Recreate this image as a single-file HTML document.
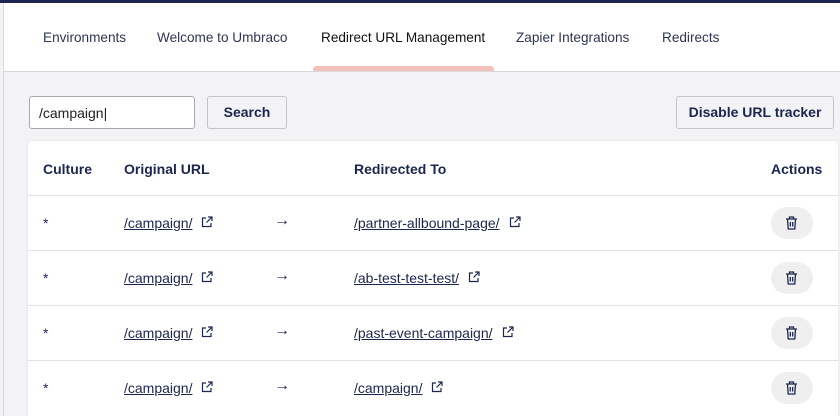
<!DOCTYPE html><html><head><style>
*{box-sizing:border-box;margin:0;padding:0}
html,body{width:840px;height:416px;overflow:hidden}
body{background:#f3f3f5;font-family:"Liberation Sans",sans-serif;color:#1b264f;position:relative}
.top{position:absolute;left:0;top:0;width:840px;height:3px;background:#1b264f}
.lb{position:absolute;left:3px;top:3px;width:1px;height:413px;background:#d8d7d9}
.hdr{position:absolute;left:4px;top:3px;right:0;height:69px;background:#fff;border-bottom:1px solid #d8d7d9}
.tab{position:absolute;top:27px;font-size:13.6px;color:#2d3653}
.act{position:absolute;left:309px;top:63px;width:181px;height:5px;background:#f5c1bc;border-radius:3px 3px 0 0}
.inp{position:absolute;left:29px;top:96px;width:166px;height:33px;background:#fff;border:1px solid #a9a9ad;border-radius:3px;font-size:14px;padding:8px 9px;color:#222}
.btn{position:absolute;top:96px;height:33px;background:#f3f3f5;border:1px solid #c5c5c8;border-radius:3px;font-size:14px;font-weight:bold;text-align:center;line-height:31px;color:#1b264f}
.card{position:absolute;left:28px;top:141px;width:810px;height:275px;background:#fff;border-radius:4px 4px 0 0;box-shadow:0 0 2px rgba(0,0,0,.1);overflow:hidden}
.row{position:absolute;left:0;width:810px;height:55px;border-top:1px solid #e2e2e4}
.c{position:absolute;top:19px;font-size:14px;color:#1b264f}
.h{font-weight:bold;font-size:14px;top:20px}
a{color:#1b264f;text-decoration:underline}
.ic{display:inline-block;margin-left:9px;vertical-align:0}
.ar{font-size:16px;top:16px}
.tr{position:absolute;left:743px;top:11px;width:42px;height:32px;border-radius:16px;background:#efefef}
.tr svg{position:absolute;left:14px;top:9px}
</style></head><body>
<div class="top"></div><div class="lb"></div>
<div class="hdr">
<span class="tab" style="left:39px">Environments</span>
<span class="tab" style="left:153px">Welcome to Umbraco</span>
<span class="tab" style="left:317px;color:#111">Redirect URL Management</span>
<span class="tab" style="left:512px">Zapier Integrations</span>
<span class="tab" style="left:658px">Redirects</span>
<div class="act"></div>
</div>
<div class="inp">/campaign|</div>
<div class="btn" style="left:207px;width:80px">Search</div>
<div class="btn" style="left:676px;width:158px">Disable URL tracker</div>
<div class="card">
<div class="c h" style="left:15px">Culture</div>
<div class="c h" style="left:96px">Original URL</div>
<div class="c h" style="left:326px">Redirected To</div>
<div class="c h" style="left:743px">Actions</div>
<div class="row" style="top:54px"><span class="c" style="left:15px">*</span><span class="c" style="left:96px"><a>/campaign/</a><svg class="ic" width="12" height="12" viewBox="0 0 12 12" fill="none" stroke="#1b264f" stroke-width="1.2"><path d="M5 2H1.5v8.5H10V7M7 1h4v4M11 1 5.5 6.5"/></svg></span><span class="c ar" style="left:246px">→</span><span class="c" style="left:326px"><a>/partner-allbound-page/</a><svg class="ic" width="12" height="12" viewBox="0 0 12 12" fill="none" stroke="#1b264f" stroke-width="1.2"><path d="M5 2H1.5v8.5H10V7M7 1h4v4M11 1 5.5 6.5"/></svg></span><div class="tr"><svg width="13" height="14" viewBox="0 0 13 14" fill="none" stroke="#1b264f" stroke-width="1.3"><path d="M1 3h11M4.5 3V1h4v2M2.5 3l.7 10h6.6l.7-10M5.3 6v4.5M7.7 6v4.5"/></svg></div></div>
<div class="row" style="top:109px"><span class="c" style="left:15px">*</span><span class="c" style="left:96px"><a>/campaign/</a><svg class="ic" width="12" height="12" viewBox="0 0 12 12" fill="none" stroke="#1b264f" stroke-width="1.2"><path d="M5 2H1.5v8.5H10V7M7 1h4v4M11 1 5.5 6.5"/></svg></span><span class="c ar" style="left:246px">→</span><span class="c" style="left:326px"><a>/ab-test-test-test/</a><svg class="ic" width="12" height="12" viewBox="0 0 12 12" fill="none" stroke="#1b264f" stroke-width="1.2"><path d="M5 2H1.5v8.5H10V7M7 1h4v4M11 1 5.5 6.5"/></svg></span><div class="tr"><svg width="13" height="14" viewBox="0 0 13 14" fill="none" stroke="#1b264f" stroke-width="1.3"><path d="M1 3h11M4.5 3V1h4v2M2.5 3l.7 10h6.6l.7-10M5.3 6v4.5M7.7 6v4.5"/></svg></div></div>
<div class="row" style="top:164px"><span class="c" style="left:15px">*</span><span class="c" style="left:96px"><a>/campaign/</a><svg class="ic" width="12" height="12" viewBox="0 0 12 12" fill="none" stroke="#1b264f" stroke-width="1.2"><path d="M5 2H1.5v8.5H10V7M7 1h4v4M11 1 5.5 6.5"/></svg></span><span class="c ar" style="left:246px">→</span><span class="c" style="left:326px"><a>/past-event-campaign/</a><svg class="ic" width="12" height="12" viewBox="0 0 12 12" fill="none" stroke="#1b264f" stroke-width="1.2"><path d="M5 2H1.5v8.5H10V7M7 1h4v4M11 1 5.5 6.5"/></svg></span><div class="tr"><svg width="13" height="14" viewBox="0 0 13 14" fill="none" stroke="#1b264f" stroke-width="1.3"><path d="M1 3h11M4.5 3V1h4v2M2.5 3l.7 10h6.6l.7-10M5.3 6v4.5M7.7 6v4.5"/></svg></div></div>
<div class="row" style="top:219px"><span class="c" style="left:15px">*</span><span class="c" style="left:96px"><a>/campaign/</a><svg class="ic" width="12" height="12" viewBox="0 0 12 12" fill="none" stroke="#1b264f" stroke-width="1.2"><path d="M5 2H1.5v8.5H10V7M7 1h4v4M11 1 5.5 6.5"/></svg></span><span class="c ar" style="left:246px">→</span><span class="c" style="left:326px"><a>/campaign/</a><svg class="ic" width="12" height="12" viewBox="0 0 12 12" fill="none" stroke="#1b264f" stroke-width="1.2"><path d="M5 2H1.5v8.5H10V7M7 1h4v4M11 1 5.5 6.5"/></svg></span><div class="tr"><svg width="13" height="14" viewBox="0 0 13 14" fill="none" stroke="#1b264f" stroke-width="1.3"><path d="M1 3h11M4.5 3V1h4v2M2.5 3l.7 10h6.6l.7-10M5.3 6v4.5M7.7 6v4.5"/></svg></div></div>
</div>
</body></html>
